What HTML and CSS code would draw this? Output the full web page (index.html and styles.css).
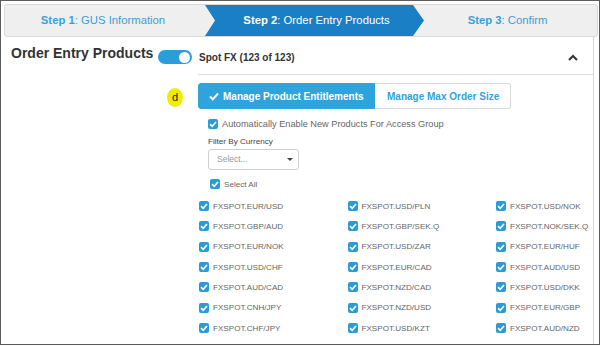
FILE: index.html
```html
<!DOCTYPE html>
<html lang="en">
<head>
  <meta charset="UTF-8" />
  <title>Order Entry Products</title>
  <link rel="stylesheet" href="styles.css">
</head>
<body>
  <div class="frame">
    <div class="stepper">
      <div class="step step-done"><b>Step 1</b>: GUS Information</div>
      <div class="step step-active"><b>Step 2</b>: Order Entry Products</div>
      <div class="step step-next"><b>Step 3</b>: Confirm</div>
    </div>

    <div class="panel">
      <h2 class="panel-title">Order Entry Products</h2>
      <div class="panel-body">
        <div class="product-head">
          <span class="toggle"><span class="toggle-knob"></span></span>
          <span class="product-name">Spot FX (123 of 123)</span>
          <svg class="collapse" width="10" height="7" viewBox="0 0 10 7"><polyline points="1,6 5,2 9,6" fill="none" stroke="#333" stroke-width="2"/></svg>
        </div>

        <div class="product-content">
          <span class="marker">d</span>

          <div class="btn-group">
            <button class="btn btn-primary">
              <svg width="10" height="9" viewBox="0 0 10 9"><polyline points="1,4.5 3.8,7.3 9,1.5" fill="none" stroke="#fff" stroke-width="2"/></svg>
              Manage Product Entitlements
            </button>
            <button class="btn">Manage Max Order Size</button>
          </div>

          <div class="options">
            <label class="check-row auto-enable"><span class="checkbox"></span>Automatically Enable New Products For Access Group</label>
            <div class="field-label">Filter By Currency</div>
            <div class="select">Select...<span class="select-caret"></span></div>
            <label class="check-row select-all"><span class="checkbox"></span>Select All</label>
          </div>

          <div class="product-grid">
            <label class="check-row"><span class="checkbox"></span>FXSPOT.EUR/USD</label>
            <label class="check-row"><span class="checkbox"></span>FXSPOT.GBP/AUD</label>
            <label class="check-row"><span class="checkbox"></span>FXSPOT.EUR/NOK</label>
            <label class="check-row"><span class="checkbox"></span>FXSPOT.USD/CHF</label>
            <label class="check-row"><span class="checkbox"></span>FXSPOT.AUD/CAD</label>
            <label class="check-row"><span class="checkbox"></span>FXSPOT.CNH/JPY</label>
            <label class="check-row"><span class="checkbox"></span>FXSPOT.CHF/JPY</label>

            <label class="check-row"><span class="checkbox"></span>FXSPOT.USD/PLN</label>
            <label class="check-row"><span class="checkbox"></span>FXSPOT.GBP/SEK.Q</label>
            <label class="check-row"><span class="checkbox"></span>FXSPOT.USD/ZAR</label>
            <label class="check-row"><span class="checkbox"></span>FXSPOT.EUR/CAD</label>
            <label class="check-row"><span class="checkbox"></span>FXSPOT.NZD/CAD</label>
            <label class="check-row"><span class="checkbox"></span>FXSPOT.NZD/USD</label>
            <label class="check-row"><span class="checkbox"></span>FXSPOT.USD/KZT</label>

            <label class="check-row"><span class="checkbox"></span>FXSPOT.USD/NOK</label>
            <label class="check-row"><span class="checkbox"></span>FXSPOT.NOK/SEK.Q</label>
            <label class="check-row"><span class="checkbox"></span>FXSPOT.EUR/HUF</label>
            <label class="check-row"><span class="checkbox"></span>FXSPOT.AUD/USD</label>
            <label class="check-row"><span class="checkbox"></span>FXSPOT.USD/DKK</label>
            <label class="check-row"><span class="checkbox"></span>FXSPOT.EUR/GBP</label>
            <label class="check-row"><span class="checkbox"></span>FXSPOT.AUD/NZD</label>
          </div>
        </div>
      </div>
    </div>
  </div>
</body>
</html>
```

FILE: styles.css
```css
* {
  margin: 0;
  padding: 0;
  box-sizing: border-box;
  font-family: 'Liberation Sans', Arial, sans-serif;
}

body {
  background: #fff;
  width: 600px;
  height: 346px;
  overflow: hidden;
}

.frame {
  width: 600px;
  height: 345px;
  border: 1px solid #5b5b5b;
  display: flex;
  flex-direction: column;
}

/* wizard steps */
.stepper {
  display: flex;
  height: 33px;
  margin: 3px 1px 0 3px;
  background: #efefef;
  border: 1px solid #dadada;
  border-radius: 3px;
  overflow: hidden;
}

.step {
  font-size: 11.3px;
  line-height: 31px;
  color: #3a9fd8;
  text-align: center;
  white-space: nowrap;
}

.step-done {
  flex: 0 0 200px;
  padding-right: 4px;
}

.step-active {
  flex: 0 0 219px;
  background: #1b7fc5;
  color: #fff;
  padding-left: 4px;
  clip-path: polygon(0 0, calc(100% - 11px) 0, 100% 50%, calc(100% - 11px) 100%, 0 100%, 10px 50%);
}

.step-next {
  flex: 1;
  padding-right: 6px;
}

/* panel */
.panel {
  flex: 1;
  display: flex;
  margin-right: 5px;
  border-right: 1px solid #d6d6d6;
}

.panel-title {
  flex: none;
  width: 157px;
  padding: 8px 0 0 10px;
  font-size: 14px;
  line-height: 16px;
  font-weight: bold;
  color: #333;
  white-space: nowrap;
}

.panel-body {
  flex: 1;
  min-width: 0;
}

.product-head {
  display: flex;
  align-items: center;
  height: 14px;
  margin-top: 13px;
  padding-right: 15px;
}

.toggle {
  width: 34px;
  height: 14px;
  border-radius: 7px;
  background: #2b9ddb;
  display: flex;
  align-items: center;
  justify-content: flex-end;
  padding-right: 2px;
}

.toggle-knob {
  width: 11px;
  height: 11px;
  border-radius: 50%;
  background: #fff;
}

.product-name {
  margin-left: 7px;
  font-size: 10px;
  font-weight: bold;
  color: #333;
}

.collapse {
  margin-left: auto;
}

.product-content {
  position: relative;
  margin: 10px 0 0 40px;
  border-top: 1px solid #dedede;
  padding-top: 8px;
}

.marker {
  position: absolute;
  left: -31px;
  top: 13px;
  width: 16px;
  height: 19px;
  border-radius: 50%;
  background: #eeec00;
  color: #222;
  font-size: 11px;
  line-height: 19px;
  text-align: center;
}

.btn-group {
  display: flex;
}

.btn {
  height: 26px;
  padding: 0 11px 0 12px;
  font-size: 10px;
  font-weight: bold;
  color: #2ea3dc;
  background: #fff;
  border: 1px solid #dcdcdc;
  border-left: none;
  border-radius: 0 3px 3px 0;
  display: flex;
  align-items: center;
  gap: 4px;
}

.btn-primary {
  width: 177px;
  padding: 0 0 0 10px;
  color: #fff;
  background: #2ea3dc;
  border: 1px solid #2ea3dc;
  border-radius: 3px 0 0 3px;
}

.options {
  padding-left: 10px;
}

.check-row {
  display: flex;
  align-items: center;
  gap: 4px;
  font-size: 8.1px;
  color: #666;
  white-space: nowrap;
}

.checkbox {
  flex: none;
  width: 10px;
  height: 10px;
  border-radius: 2px;
  background: #2b9bd8 url("data:image/svg+xml,%3Csvg xmlns='http://www.w3.org/2000/svg' viewBox='0 0 10 10'%3E%3Cpolyline points='2,5.2 4.2,7.3 8,3' fill='none' stroke='white' stroke-width='1.6'/%3E%3C/svg%3E") no-repeat center / 10px 10px;
}

.auto-enable {
  margin-top: 10px;
  height: 10px;
  font-size: 9.2px;
}

.field-label {
  margin-top: 8px;
  font-size: 8.1px;
  line-height: 10px;
  color: #444;
}

.select {
  position: relative;
  width: 91px;
  height: 21px;
  margin-top: 2px;
  padding-left: 8px;
  border: 1px solid #cfcfcf;
  border-radius: 3px;
  font-size: 8.5px;
  line-height: 19px;
  color: #999;
}

.select-caret {
  position: absolute;
  right: 5px;
  top: 8px;
  border-left: 3px solid transparent;
  border-right: 3px solid transparent;
  border-top: 3px solid #444;
}

.select-all {
  margin: 9px 0 0 2px;
  height: 10px;
}

.product-grid {
  display: grid;
  grid-template-columns: 148.5px 148.5px 1fr;
  grid-template-rows: repeat(7, 20.33px);
  grid-auto-flow: column;
  margin: 7px 0 0 1px;
}
```
